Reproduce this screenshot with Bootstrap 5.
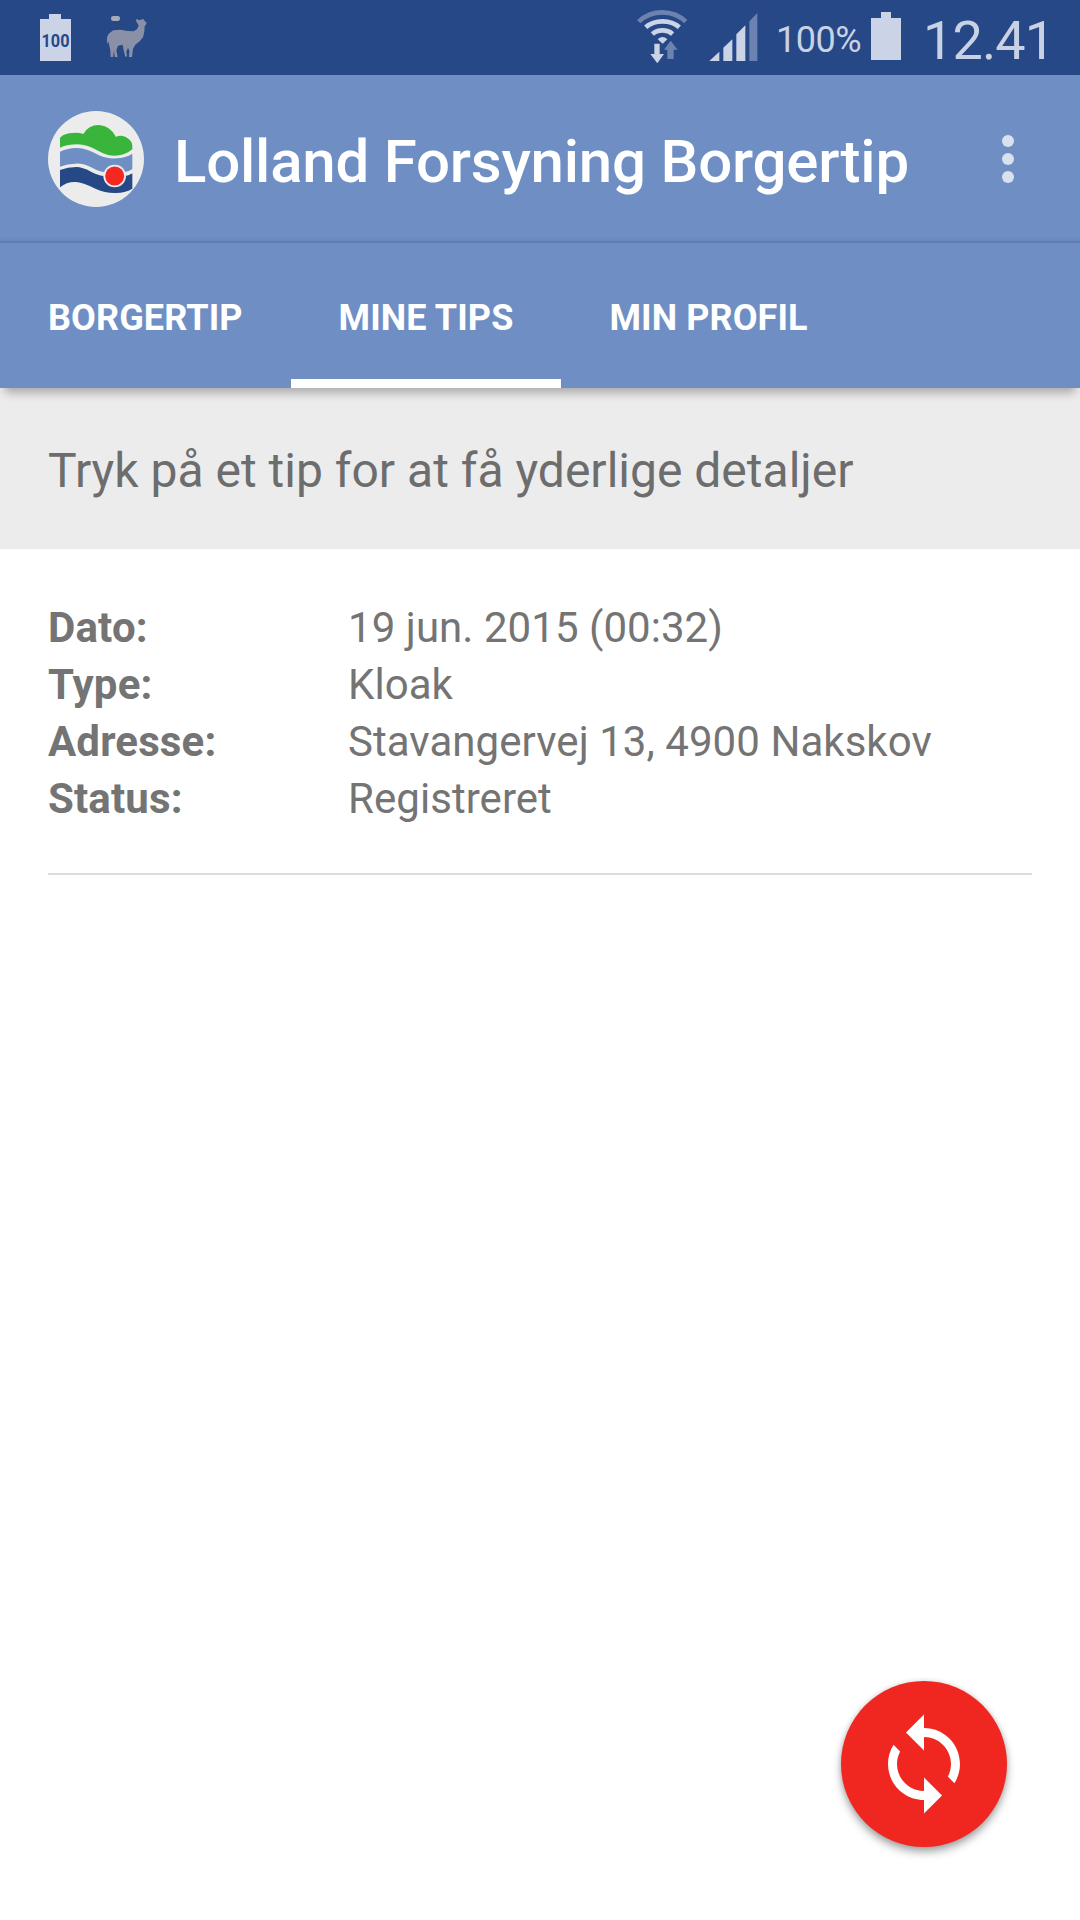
<!DOCTYPE html>
<html lang="da">
<head>
<meta charset="utf-8">
<meta name="viewport" content="width=device-width, initial-scale=1">
<title>Lolland Forsyning Borgertip</title>
<link href="https://cdn.jsdelivr.net/npm/bootstrap@5.3.0/dist/css/bootstrap.min.css" rel="stylesheet">
<style>
body{font-family:Roboto,"Noto Sans",sans-serif;color:#747474;height:1920px;overflow:hidden}
.statusbar{height:75px;background:#264886;color:#c9d2e5;padding:0 30px 0 40px}
.statusbar svg{display:block;flex:none;overflow:visible}
.ic-llama{margin-left:35px}
.ic-signal{margin-left:20px}
.pct{font-size:36px;line-height:40px;margin:5px 0 0 18px;width:88px;letter-spacing:-.5px}
.ic-batt{margin-left:7px}
.clock{font-size:54px;line-height:60px;margin:6px 0 0 22px;width:127px;letter-spacing:-.9px;white-space:nowrap}
.appbar{height:168px;background:linear-gradient(#6f8fc4 0 161px,#6987ba 166px,#607daf 166px 168px);padding:0 66px 0 48px}
.apptitle{font-size:60px;line-height:70px;font-weight:500;color:#fff;margin:5px 0 0 30px;letter-spacing:-.22px;white-space:nowrap}
.tabs-bar{height:145px;background:#6f8fc4;position:relative;z-index:2;box-shadow:0 10px 9px -5px rgba(0,0,0,.28)}
.tabs-bar .nav-link{height:145px;padding:13px 48px 0;font-size:36px;line-height:42px;font-weight:700;letter-spacing:.1px;color:#fff;border-bottom:9px solid transparent;white-space:nowrap}
.tabs-bar .nav-link.active{border-bottom-color:#fff}
.hint{height:161px;background:#ececec;color:#6d6d6d;font-size:48px;line-height:56px;padding:5px 48px 0}
.tip{margin:0 48px;padding:50px 0 46px;font-size:42px;line-height:57px;border-bottom:2px solid #dcdcdc}
.tip dt{width:300px;font-weight:700;letter-spacing:.15px}
.tip dd{margin:0;letter-spacing:.05px}
.fab{right:73px;bottom:73px;width:166px;height:166px;background:#ef2720;box-shadow:0 5px 9px rgba(0,0,0,.34),0 0 5px rgba(0,0,0,.12)}
</style>
<script src="https://cdn.jsdelivr.net/npm/bootstrap@5.3.0/dist/js/bootstrap.bundle.min.js"></script>
</head>
<body class="bg-white position-relative">
<div class="statusbar d-flex align-items-center">
  <svg width="32" height="75" viewBox="40 0 32 75"><path fill="#cbd3e6" d="M40 19h9v-5h12v5h10v42H40z"/><text x="41.500" y="47.300" font-family="Roboto" font-weight="700" font-size="18.500" textLength="28" lengthAdjust="spacingAndGlyphs" fill="#264886">100</text></svg>
  <svg class="ic-llama" width="40" height="75" viewBox="321 0 120 225"><rect x="333" y="48" width="27" height="15" rx="7" fill="#a7abba"/><path fill="#8a91a6" d="M407 60L412 57L416 61L430 57L434 63L440 68L437 75L434 78L433 95L429 112L419 124L406 134L399 146L396 171H387L388 153L384 143L379 155L381 168L376 171L371 151L368 134L354 137L349 151L353 171H344L342 151L339 171H332L331 151L328 137L326 122L324 133L321 127V112L326 101L340 91L361 89L383 93L401 94L411 88L416 77Z"/></svg>
  <div class="d-flex align-items-center ms-auto">
    <svg width="52" height="75" viewBox="50 0 156 225"><g fill="none" stroke="#cbd3e6" stroke-width="14"><path stroke="#6c82b0" stroke-width="14" d="M55 65Q84 37 126 37Q168 37 196 65"/><path d="M76 82Q96 64 127 64Q157 64 177 82"/><path d="M96 102Q108 91 127 91Q144 91 157 102"/></g><path fill="#cbd3e6" d="M112 118Q127 104 141 118L127 131Z"/><path fill="#cbd3e6" d="M102 131h16v31h13l-20 28-21-28h12z"/><path fill="#6c82b0" d="M151 122l21 27h-12v28h-19v-28h-10z"/></svg>
    <svg class="ic-signal" width="49" height="75" viewBox="269 0 147 225"><path fill="#cbd3e6" d="M270 183l30-28v28zM312 183v-40l27-25v65zM351 183v-80l27-27v107z"/><path fill="#6c82b0" d="M390 183V64l24-25v144z"/></svg>
    <div class="pct">100%</div>
    <svg class="ic-batt" width="30" height="75" viewBox="871 0 30 75"><path fill="#cbd3e6" d="M871 18h10v-6h10v6h10v42h-30z"/></svg>
    <div class="clock">12.41</div>
  </div>
</div>
<header class="appbar d-flex align-items-center">
  <svg width="96" height="96" viewBox="54 48 288 288" class="flex-shrink-0"><circle cx="198" cy="192" r="144" fill="#ececec"/><path fill="#39b53b" d="M90 158V128Q104 114 128 114Q147 112 160 117Q175 90 206 90Q241 92 258 126Q270 119 287 126Q306 135 307 152V163Q285 182 254 182Q232 182 210 170Q170 148 143 148Q114 148 90 158Z"/><path fill="#6f8fc4" d="M90 170Q116 158 143 159Q168 160 204 179Q232 192 259 190Q287 189 307 176V223L288 233L226 231Q211 232 188 219Q158 204 136 206Q111 206 90 215Z"/><path fill="#264886" d="M90 225Q113 216 139 216Q157 216 183 230Q205 242 224 243L287 240L307 235V281Q284 294 258 294Q226 295 198 282Q154 260 136 261Q111 260 90 277Z"/><circle cx="254" cy="243" r="34" fill="#ececec"/><path d="M282 232Q295 230 309 222V233Q298 241 286 243Z" fill="#ececec"/><circle cx="254" cy="243" r="28.500" fill="#f42820"/></svg>
  <h1 class="apptitle mb-0">Lolland Forsyning Borgertip</h1>
  <svg class="ms-auto" width="12" height="50" viewBox="0 0 12 50" fill="#d9e1ef"><circle cx="6" cy="7" r="6"/><circle cx="6" cy="25" r="6"/><circle cx="6" cy="43" r="6"/></svg>
</header>
<nav class="tabs-bar nav flex-nowrap">
  <a class="nav-link d-flex align-items-center" href="#">BORGERTIP</a>
  <a class="nav-link active d-flex align-items-center" href="#">MINE TIPS</a>
  <a class="nav-link d-flex align-items-center" href="#">MIN PROFIL</a>
</nav>
<div class="hint d-flex align-items-center">Tryk på et tip for at få yderlige detaljer</div>
<main>
  <dl class="tip">
    <div class="d-flex"><dt>Dato:</dt><dd>19 jun. 2015 (00:32)</dd></div>
    <div class="d-flex"><dt>Type:</dt><dd>Kloak</dd></div>
    <div class="d-flex"><dt>Adresse:</dt><dd>Stavangervej 13, 4900 Nakskov</dd></div>
    <div class="d-flex"><dt>Status:</dt><dd>Registreret</dd></div>
  </dl>
</main>
<button class="fab position-absolute rounded-circle border-0 p-0 d-flex align-items-center justify-content-center" aria-label="Opdater">
  <svg width="108" height="108" viewBox="0 0 24 24" fill="#fff"><path d="M12 4V1L8 5l4 4V6c3.310 0 6 2.690 6 6 0 1.010-.25 1.970-.7 2.800l1.460 1.460C19.540 15.030 20 13.570 20 12c0-4.420-3.580-8-8-8zm0 14c-3.310 0-6-2.690-6-6 0-1.010.25-1.970.7-2.800L5.240 7.740C4.460 8.970 4 10.430 4 12c0 4.420 3.580 8 8 8v3l4-4-4-4v3z"/></svg>
</button>
</body>
</html>
